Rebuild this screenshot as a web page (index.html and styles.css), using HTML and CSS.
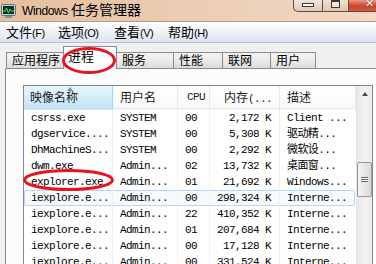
FILE: index.html
```html
<!DOCTYPE html>
<html lang="zh-CN">
<head>
    <meta charset="UTF-8">
    <title>Windows 任务管理器</title>
    <link rel="stylesheet" href="styles.css">
</head>
<body>
<div class="window">
    <div class="titlebar">
        <svg class="app-icon" width="16" height="16" viewBox="0 0 16 16">
            <rect x="0.5" y="1.5" width="14" height="11" rx="1" fill="#c4ccd4" stroke="#66737f"/>
            <rect x="2" y="3" width="11" height="8" fill="#12301f"/>
            <polyline points="2,8 4.5,8 5.5,5 7.5,10 9,6 10,8 13,8" fill="none" stroke="#3ee35e" stroke-width="1"/>
            <rect x="4" y="13" width="7" height="2" fill="#8793a0"/>
        </svg>
        <div class="title"><span class="title-latin">Windows</span> 任务管理器</div>
        <div class="winbtns">
            <div class="wbtn wbtn-min"><span class="glyph-min"></span></div>
            <div class="wbtn wbtn-max"><span class="glyph-max"></span></div>
            <div class="wbtn wbtn-close"><span class="glyph-close">✕</span></div>
        </div>
    </div>

    <div class="menubar">
        <span class="menu-item m1">文件<span class="mn">(F)</span></span>
        <span class="menu-item m2">选项<span class="mn">(O)</span></span>
        <span class="menu-item m3">查看<span class="mn">(V)</span></span>
        <span class="menu-item">帮助<span class="mn">(H)</span></span>
    </div>

    <div class="tabs">
        <div class="tab t-apps">应用程序</div>
        <div class="tab tab-active t-proc">进程</div>
        <div class="tab t-svc">服务</div>
        <div class="tab t-perf">性能</div>
        <div class="tab t-net">联网</div>
        <div class="tab t-users">用户</div>
    </div>

    <div class="panel">
        <div class="listview">
            <div class="list-main">
                <div class="list-head">
                    <div class="hcell h-sorted">映像名称</div>
                    <div class="hcell">用户名</div>
                    <div class="hcell h-cpu mono">CPU</div>
                    <div class="hcell h-mem">内存<span class="mono">(...</span></div>
                    <div class="hcell">描述</div>
                </div>
                <div class="list-rows mono">
                    <div class="row"><span>csrss.exe</span><span>SYSTEM</span><span>00</span><span class="num">2,172 K</span><span>Client ...</span></div>
                    <div class="row"><span>dgservice....</span><span>SYSTEM</span><span>00</span><span class="num">5,308 K</span><span>驱动精...</span></div>
                    <div class="row"><span>DhMachineS...</span><span>SYSTEM</span><span>00</span><span class="num">2,292 K</span><span>微软设...</span></div>
                    <div class="row"><span>dwm.exe</span><span>Admin...</span><span>02</span><span class="num">13,732 K</span><span>桌面窗...</span></div>
                    <div class="row"><span>explorer.exe</span><span>Admin...</span><span>01</span><span class="num">21,692 K</span><span>Windows...</span></div>
                    <div class="row row-hot"><span>iexplore.e...</span><span>Admin...</span><span>00</span><span class="num">298,324 K</span><span>Interne...</span></div>
                    <div class="row"><span>iexplore.e...</span><span>Admin...</span><span>22</span><span class="num">410,352 K</span><span>Interne...</span></div>
                    <div class="row"><span>iexplore.e...</span><span>Admin...</span><span>01</span><span class="num">207,684 K</span><span>Interne...</span></div>
                    <div class="row"><span>iexplore.e...</span><span>Admin...</span><span>00</span><span class="num">17,128 K</span><span>Interne...</span></div>
                    <div class="row"><span>iexplore.e...</span><span>Admin...</span><span>00</span><span class="num">331,524 K</span><span>Interne...</span></div>
                </div>
            </div>
            <div class="scrollbar">
                <div class="sb-up"><span class="sb-arrow"></span></div>
                <div class="sb-thumb"><span class="sb-grip"></span></div>
            </div>
        </div>
    </div>

    <svg class="marks" width="376" height="264" viewBox="0 0 376 264">
        <ellipse cx="89" cy="60.5" rx="25.5" ry="12" fill="none" stroke="#e8131b" stroke-width="3"/>
        <ellipse cx="68.5" cy="180" rx="44" ry="9.5" fill="none" stroke="#e8131b" stroke-width="3"/>
    </svg>
</div>
</body>
</html>
```

FILE: styles.css
```css
body {
    margin: 0;
    background: #f0f0f0;
    font-family: "Noto Sans CJK SC", sans-serif;
}
.window {
    position: relative;
    width: 376px;
    height: 264px;
    overflow: hidden;
    background: #f0f0f0;
}
.mono {
    font-family: "Liberation Mono", "Noto Sans CJK SC", monospace;
    font-size: 11px;
    letter-spacing: -0.6px;
}

/* title bar */
.titlebar {
    display: flex;
    align-items: flex-start;
    height: 21px;
    border-bottom: 1px solid #b69c88;
    background: linear-gradient(to right, #e4bf9f, #ebcbb1 45%, #f1d9c6);
}
.app-icon {
    margin: 3px 0 0 1px;
}
.title {
    margin-left: 5px;
    font-size: 14px;
    line-height: 18px;
    color: #000;
}
.title-latin {
    font-family: "Liberation Sans", sans-serif;
    font-size: 12px;
    letter-spacing: -0.4px;
}
.winbtns {
    display: flex;
    margin-left: auto;
    margin-right: -20px;
    height: 12px;
}
.wbtn {
    box-sizing: border-box;
    height: 12px;
    display: flex;
    align-items: center;
    justify-content: center;
    border-bottom: 1px solid #5e4d42;
    border-left: 1px solid #5e4d42;
}
.wbtn-min {
    width: 29px;
    border-bottom-left-radius: 5px;
    background: linear-gradient(#f3e4d7, #e2c9b3);
}
.wbtn-max {
    width: 26px;
    background: linear-gradient(#f1e1d3, #dfc5ae);
}
.wbtn-close {
    width: 48px;
    justify-content: flex-start;
    padding-left: 16px;
    background: linear-gradient(#e9987f, #c9442a 55%, #d6593c);
}
.glyph-min {
    width: 10px;
    height: 2px;
    margin-top: -2px;
    border: 1px solid #3a3a3a;
    background: #fff;
}
.glyph-max {
    width: 7px;
    height: 5px;
    margin-top: -4px;
    border: 1px solid #3a3a3a;
    border-top-width: 2px;
    background: #f4e6da;
}
.glyph-close {
    color: #fff;
    font-family: "DejaVu Sans", sans-serif;
    font-size: 11px;
    font-weight: bold;
    line-height: 10px;
    margin-top: -3px;
    text-shadow: 0 0 1px #5a1a0c;
}

/* menu bar */
.menubar {
    display: flex;
    height: 20px;
    align-items: center;
    border-bottom: 1px solid #b7bfcc;
    background: linear-gradient(#ffffff, #f2f5fa 40%, #dce3f0);
    font-size: 13px;
    color: #000;
}
.menu-item {
    margin-left: 6px;
    line-height: 16px;
}
.m1 { width: 46px; }
.m2 { width: 50px; }
.m3 { width: 48px; }
.mn {
    font-family: "Liberation Sans", sans-serif;
    font-size: 11px;
    letter-spacing: -0.5px;
}

/* tabs */
.tabs {
    display: flex;
    align-items: flex-end;
    height: 25px;
    padding-left: 6px;
}
.tab {
    box-sizing: border-box;
    height: 16px;
    padding-left: 5px;
    border: 1px solid #898c95;
    border-bottom: none;
    border-right: none;
    background: linear-gradient(#f4f4f4, #ebebeb 50%, #dbdbdb);
    font-size: 12px;
    line-height: 14px;
    color: #000;
}
.t-apps { width: 57px; }
.t-proc { width: 54px; }
.t-svc { width: 56px; border-left: none; }
.t-perf { width: 49px; }
.t-net { width: 48px; }
.t-users { width: 46px; border-right: 1px solid #898c95; }
.tab-active {
    position: relative;
    z-index: 1;
    height: 23px;
    margin-bottom: -1px;
    padding: 2px 0 0 4px;
    border-right: 1px solid #898c95;
    background: #fff;
    font-size: 13px;
}

/* panel + list view */
.panel {
    margin-left: 5px;
    height: 196px;
    padding: 16px 0 0 17px;
    border-top: 1px solid #898c95;
    border-left: 1px solid #898c95;
    background: #fcfcfc;
}
.listview {
    display: flex;
    box-sizing: border-box;
    width: 350px;
    height: 200px;
    border: 1px solid #828790;
    border-bottom: none;
    background: #fff;
}
.list-main {
    width: 332px;
}
.list-head,
.row {
    display: grid;
    grid-template-columns: 89px 65px 32px 70px 76px;
}
.list-head {
    box-sizing: border-box;
    height: 23px;
    border-bottom: 1px solid #e2e4e8;
    background: linear-gradient(#ffffff, #f7f8fa);
}
.hcell {
    box-sizing: border-box;
    padding-left: 7px;
    border-right: 1px solid #e3e8ee;
    font-size: 12px;
    line-height: 22px;
    color: #1c1c1c;
}
.h-sorted {
    position: relative;
    padding-left: 6px;
    border-right-color: #96d9f9;
    background: linear-gradient(#e6f5fd, #d4ecfa 50%, #c2e3f6);
}
.h-sorted::before {
    content: "";
    position: absolute;
    top: 1px;
    left: 43px;
    border-left: 3px solid transparent;
    border-right: 3px solid transparent;
    border-bottom: 4px solid #6f91b5;
}
.h-cpu {
    padding-left: 9px;
    font-size: 11px;
}
.h-mem {
    padding: 0 7px 0 0;
    text-align: right;
}
.list-rows {
    padding-top: 1px;
}
.row {
    box-sizing: border-box;
    height: 16px;
    line-height: 16px;
    color: #000;
}
.row span {
    box-sizing: border-box;
    padding-left: 7px;
    border-right: 1px solid #f0f0f0;
    white-space: nowrap;
    overflow: hidden;
}
.row span:last-child {
    border-right: none;
}
.row .num {
    padding: 0 8px 0 0;
    text-align: right;
}
.row-hot {
    border-radius: 2px;
    background: #f8fbfe;
    box-shadow: inset 0 0 0 1px #b9d6f6;
    margin-right: 1px;
}

/* scrollbar */
.scrollbar {
    box-sizing: border-box;
    width: 16px;
    border-left: 1px solid #e4e4e4;
    background: linear-gradient(to right, #e8e8e8, #f2f2f2 50%, #ebebeb);
}
.sb-up {
    height: 17px;
    display: flex;
    align-items: center;
    justify-content: center;
}
.sb-arrow {
    margin-top: -2px;
    border-left: 3.5px solid transparent;
    border-right: 3.5px solid transparent;
    border-bottom: 4px solid #4a4a4a;
}
.sb-thumb {
    box-sizing: border-box;
    height: 35px;
    margin-top: 59px;
    border: 1px solid #979797;
    border-radius: 2px;
    background: linear-gradient(to right, #f5f5f5, #e6e6e6 50%, #d8d8d8);
    display: flex;
    align-items: center;
    justify-content: center;
}
.sb-grip {
    width: 7px;
    height: 5px;
    background: repeating-linear-gradient(#6a6a6a 0 1px, #fafafa 1px 2px);
}

/* red annotations */
.marks {
    position: absolute;
    z-index: 5;
    top: 0;
    left: 0;
    pointer-events: none;
}
```
